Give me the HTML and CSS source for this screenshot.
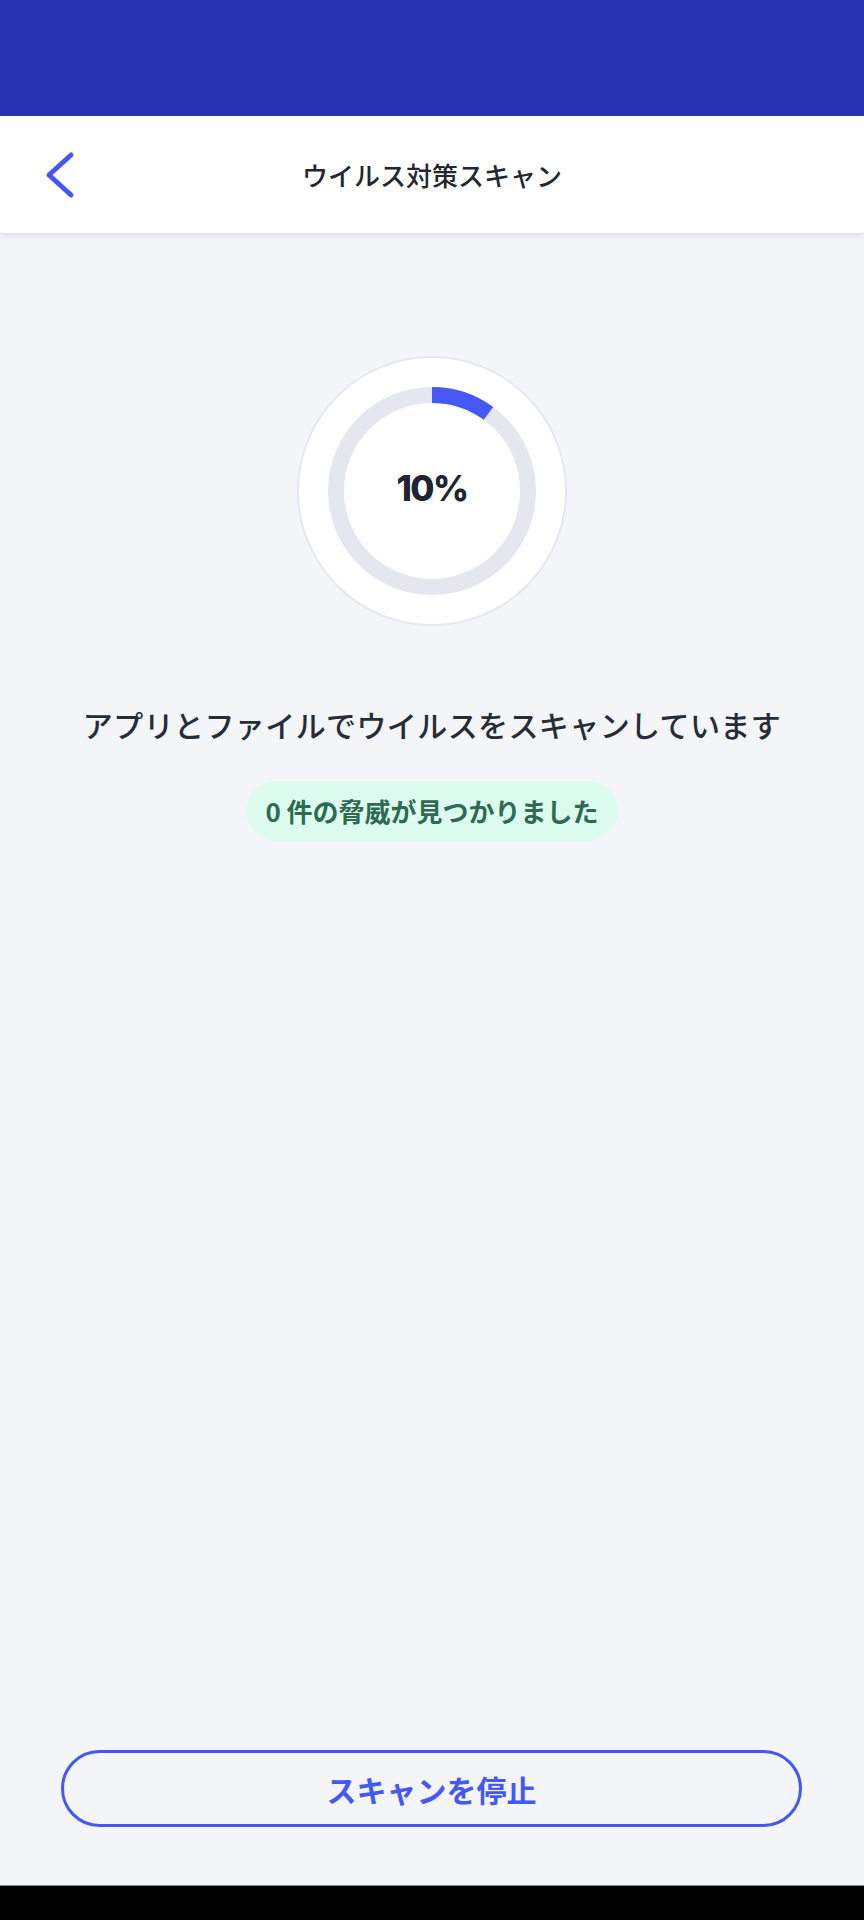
FILE: index.html
```html
<!DOCTYPE html>
<html lang="ja">
<head>
    <meta charset="UTF-8">
    <meta name="viewport" content="width=device-width, initial-scale=1.0">
    <title>ウイルス対策スキャン</title>
    <link rel="stylesheet" href="styles.css">
</head>
<body>
    <div class="status-bar"></div>

    <header class="app-bar">
        <button class="back" aria-label="戻る">
            <svg width="32" height="48" viewBox="0 0 32 48">
                <path d="M27 4 L5 24 L27 44" fill="none" stroke="#4557f5" stroke-width="5" stroke-linecap="round" stroke-linejoin="round"/>
            </svg>
        </button>
        <h1>ウイルス対策スキャン</h1>
        <span></span>
    </header>

    <main class="scan">
        <div class="dial">
            <svg width="266" height="266" viewBox="0 0 266 266">
                <circle cx="133" cy="133" r="96" fill="none" stroke="#e4e7ef" stroke-width="16"/>
                <circle cx="133" cy="133" r="96" fill="none" stroke="#4557f5" stroke-width="16"
                        stroke-dasharray="60.3 603.2" transform="rotate(-90 133 133)"/>
            </svg>
            <span class="percent">10%</span>
        </div>
        <p class="scan-msg">アプリとファイルでウイルスをスキャンしています</p>
        <p class="threats">0 件の脅威が見つかりました</p>
    </main>

    <footer class="actions">
        <button class="stop">スキャンを停止</button>
    </footer>

    <div class="nav-bar"></div>
</body>
</html>
```

FILE: styles.css
```css
body {
    margin: 0;
    height: 1920px;
    display: flex;
    flex-direction: column;
    background-color: #f4f5f9;
    font-family: "Noto Sans CJK JP", "Noto Sans", sans-serif;
    color: #252a35;
    overflow: hidden;
}

.status-bar {
    height: 116px;
    background-color: #2835b5;
}

/* Cabecera */
.app-bar {
    height: 117px;
    display: grid;
    grid-template-columns: 1fr auto 1fr;
    align-items: center;
    background: white;
    box-shadow: 0 2px 6px rgba(0, 0, 0, 0.12);
    position: relative;
    z-index: 1;
}

.back {
    justify-self: start;
    margin-left: 44px;
    padding: 0;
    border: none;
    background: none;
    display: flex;
    cursor: pointer;
}

.app-bar h1 {
    margin: 0;
    font-size: 26px;
    font-weight: 500;
    color: #23282f;
}

/* Progreso */
.scan {
    flex: 1;
    display: flex;
    flex-direction: column;
    align-items: center;
}

.dial {
    margin-top: 123px;
    width: 270px;
    height: 270px;
    box-sizing: border-box;
    border: 2px solid #e5e7ef;
    border-radius: 50%;
    background: white;
    display: grid;
    place-items: center;
}

.dial svg,
.dial .percent {
    grid-area: 1 / 1;
}

.percent {
    margin-bottom: 6px;
    font-family: Inter, "Noto Sans", sans-serif;
    font-size: 35px;
    font-weight: 800;
    letter-spacing: -1.5px;
    color: #1f2530;
}

.scan-msg {
    margin: 78px 0 0;
    font-size: 30px;
    line-height: 40px;
    letter-spacing: 0.4px;
    font-weight: 500;
    color: #272c36;
}

.threats {
    margin: 37px 0 0;
    padding: 12px 19px;
    border-radius: 30px;
    background-color: #dcfcef;
    color: #2e6b50;
    font-size: 26px;
    line-height: 36px;
    font-weight: 700;
}

/* Botón */
.actions {
    padding: 0 62px 58px 61px;
}

.stop {
    width: 100%;
    height: 77px;
    box-sizing: border-box;
    border: 3.5px solid #4557f5;
    border-radius: 40px;
    background: transparent;
    color: #4557f5;
    font-family: inherit;
    font-size: 30px;
    font-weight: 700;
    cursor: pointer;
}

.nav-bar {
    height: 34px;
    background: #000;
    border-top: 1px solid #8a8a8a;
}
```
